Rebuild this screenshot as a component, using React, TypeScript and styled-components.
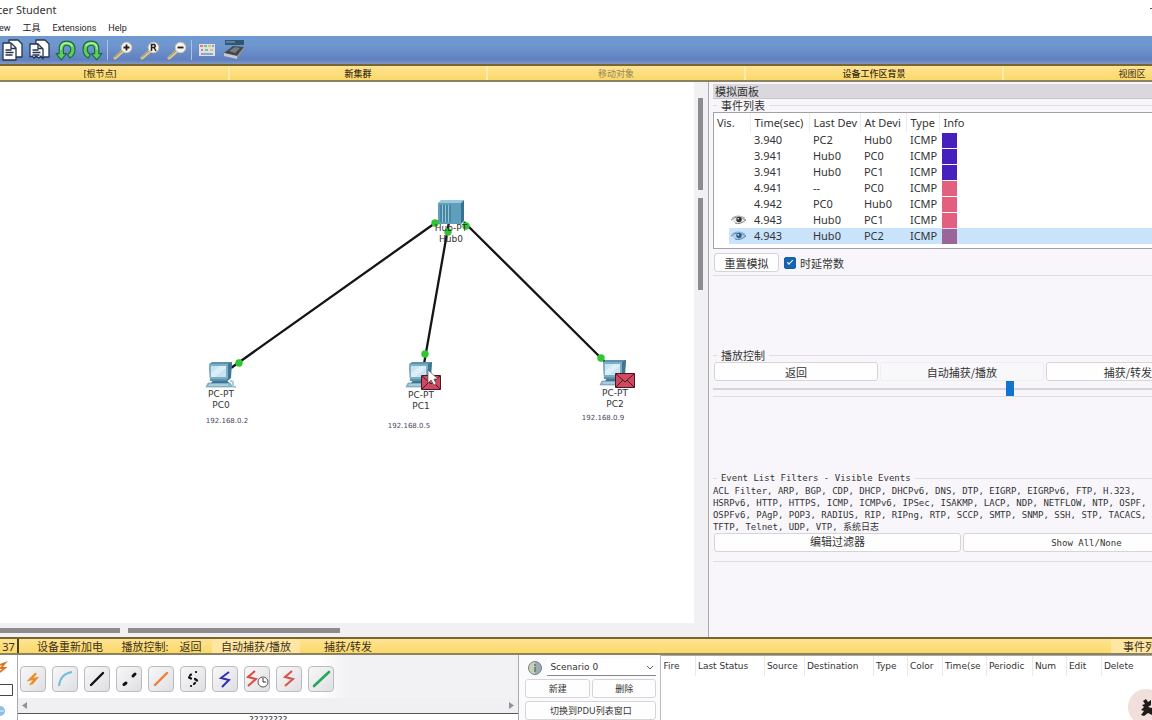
import React, { useState } from "react";
import styled, { createGlobalStyle } from "styled-components";

const CJK = '"Noto Sans CJK SC"';

const GlobalStyle = createGlobalStyle`
  *, *::before, *::after { box-sizing: border-box; }
  body { margin: 0; background: #fff; color: #333; overflow: hidden; font-family: "Noto Sans", ${CJK}, sans-serif; font-size: 11px; }
  button, input, select { font: inherit; color: inherit; margin: 0; padding: 0; }
`;

const Page = styled.div`
  display: flex;
  flex-direction: column;
  height: 100vh;
  overflow: hidden;
`;

const TitleBar = styled.header`
  display: flex;
  justify-content: space-between;
  height: 20px;
  line-height: 20px;
  font-size: 11px;
  white-space: nowrap;
`;
const TitleText = styled.span`
  margin-left: -3px;
`;
const Minimize = styled.span`
  width: 2px;
  height: 1px;
  margin-top: 8px;
  background: #555;
`;

const MenuBar = styled.nav`
  display: flex;
  gap: 12px;
  height: 16px;
  margin-left: -9px;
  font: 9px/16px Roboto, ${CJK}, sans-serif;
`;
const MenuLink = styled.a`
  color: #222;
  text-decoration: none;
`;

const ToolBar = styled.div`
  display: flex;
  align-items: center;
  height: 28px;
  background: linear-gradient(#7099d2, #6f96ce 35%, #6080bf 85%, #8098c4);
  & > :first-child { margin-left: -2px; }
`;
const ToolButton = styled.button`
  width: 27px;
  height: 24px;
  border: 0;
  background: none;
  display: grid;
  place-items: center;
`;
const ToolDivider = styled.i`
  width: 1px;
  height: 20px;
  margin: 0 1px;
  background: #a9c2e6;
`;

const YellowBar = styled.div`
  display: flex;
  flex: none;
  height: 18px;
  overflow: hidden;
  border-top: 2px solid #77672f;
  border-bottom: 2px solid #8a8262;
  background: linear-gradient(#ffe394, #fbd968);
`;
const WorkspaceBar = styled(YellowBar)`
  & > :first-child { margin-left: -28px; }
`;
const RootTab = styled.button<{ $bold?: boolean; $dim?: boolean }>`
  flex: 0 0 258px;
  border: 0;
  border-right: 2px solid #ffeaa8;
  background: none;
  font: ${(p) => (p.$bold ? 500 : 400)} 9px/13px "Noto Sans", ${CJK}, sans-serif;
  color: ${(p) => (p.$dim ? "#94865a" : "#3b3016")};
`;

const Main = styled.main`
  display: grid;
  grid-template-columns: 8fr 5fr;
  flex: 1;
  min-height: 0;
`;

const Workspace = styled.section`
  display: grid;
  grid-template-columns: 1fr 14px;
  grid-template-rows: 1fr 14px;
  min-width: 0;
  min-height: 0;
  background: #f1f0f2;
  border-right: 1px solid #a9a8ab;
`;
const Canvas = styled.div`
  position: relative;
  overflow: hidden;
  background: #fff;
  font: 10px/11px "DejaVu Sans", sans-serif;
`;
const Links = styled.svg`
  display: block;
`;
const NodeLabel = styled.div<{ $x: number; $y: number; $small?: boolean }>`
  position: absolute;
  left: ${(p) => p.$x}px;
  top: ${(p) => p.$y}px;
  transform: translateX(-50%);
  text-align: center;
  white-space: pre;
  color: ${(p) => (p.$small ? "#4b4560" : "#333")};
  font-size: ${(p) => (p.$small ? 7 : 9)}px;
`;
const VTrack = styled.div`
  display: flex;
  flex-direction: column;
  align-items: center;
  gap: 8px;
  padding-top: 16px;
`;
const HTrack = styled.div`
  display: flex;
  align-items: center;
  gap: 8px;
`;
const Thumb = styled.i<{ $w: number; $h: number }>`
  width: ${(p) => p.$w}px;
  height: ${(p) => p.$h}px;
  background: #8c8b8e;
`;

const Panel = styled.aside`
  min-width: 0;
  overflow: hidden;
  padding-left: 4px;
  background: #f8f6fa;
`;
const PanelTitle = styled.h2`
  height: 15px;
  margin: 2px 0 0;
  padding-left: 2px;
  font: 11px/14px ${CJK}, sans-serif;
  background: #dad8dc;
  border-bottom: 1px solid #c6c4c8;
`;
const Group = styled.fieldset<{ $h: number; $mono?: boolean }>`
  width: 497px;
  height: ${(p) => p.$h}px;
  min-width: 0;
  margin: 0;
  padding: 0;
  border: 0;
  font-family: ${(p) => (p.$mono ? `"DejaVu Sans Mono", ${CJK}, monospace` : `${CJK}, sans-serif`)};
  font-size: 10px;
`;
const Legend = styled.legend<{ $text?: number }>`
  display: flex;
  align-items: center;
  gap: 4px;
  width: 100%;
  height: 13px;
  padding: 0;
  line-height: 13px;
  font-size: ${(p) => p.$text ?? 11}px;
  white-space: nowrap;
  &::before, &::after { content: ""; height: 1px; background: #e0dee2; }
  &::before { width: 4px; }
  &::after { flex: 1; }
`;
const Rule = styled.hr<{ $after?: number }>`
  width: 497px;
  height: 1px;
  margin: 0 0 ${(p) => p.$after ?? 0}px;
  border: 0;
  background: #dfdde1;
`;

const EventBox = styled.div`
  height: 137px;
  border: 1px solid #a2a1a5;
  background: #fff;
  overflow: hidden;
`;
const EventTable = styled.table`
  width: 100%;
  table-layout: fixed;
  border-collapse: collapse;
  font: 11px/16px "Noto Sans", sans-serif;
  text-align: left;
  white-space: nowrap;
  th, td { padding: 0; height: 16px; font-weight: 400; overflow: hidden; }
  thead th { height: 19px; padding-left: 3px; border-right: 1px solid #ececee; }
  tbody td { padding-left: 3px; }
`;
const EventRow = styled.tr<{ $selected?: boolean }>`
  background: ${(p) => (p.$selected ? "linear-gradient(90deg, #fff 15px, #c9e3fb 15px)" : "none")};
`;
const Swatch = styled.i<{ $c: string }>`
  display: block;
  width: 15px;
  height: 15px;
  margin-left: -1px;
  background: ${(p) => p.$c};
`;
const EyeCell = styled.td`
  svg { display: block; margin-left: 13px; }
`;

const Row = styled.div<{ $top?: number; $gap?: number }>`
  display: flex;
  align-items: center;
  gap: ${(p) => p.$gap ?? 2}px;
  padding: ${(p) => p.$top ?? 0}px 0 0 1px;
`;
const PushButton = styled.button<{ $w?: number; $flat?: boolean; $text?: number }>`
  flex: ${(p) => (p.$w ? `0 0 ${p.$w}px` : "1")};
  height: 19px;
  border: 1px solid ${(p) => (p.$flat ? "#efedf1" : "#d6d4d8")};
  border-radius: 3px;
  background: ${(p) => (p.$flat ? "#f8f7fa" : "#fefefe")};
  font-size: ${(p) => p.$text ?? 11}px;
  line-height: 16px;
  white-space: nowrap;
`;
const CheckLabel = styled.label`
  display: flex;
  align-items: center;
  gap: 4px;
  font-size: 11px;
  line-height: 16px;
`;
const Check = styled.input`
  appearance: none;
  width: 12px;
  height: 12px;
  border: 1px solid #1460a8;
  border-radius: 2px;
  background: #fff;
  display: grid;
  place-items: center;
  &:checked { background: #1665b0; }
  &:checked::after {
    content: "";
    width: 6px;
    height: 3px;
    margin-bottom: 2px;
    border: solid #fff;
    border-width: 0 0 1px 1px;
    transform: rotate(-45deg);
  }
`;
const Slider = styled.input`
  appearance: none;
  display: block;
  width: 497px;
  height: 15px;
  background: linear-gradient(#d6d4d8, #d6d4d8) center / 100% 2px no-repeat;
  &::-webkit-slider-thumb {
    appearance: none;
    width: 8px;
    height: 15px;
    background: #1374cf;
  }
`;
const FilterText = styled.p`
  margin: 0;
  font-size: 9px;
  line-height: 12px;
  white-space: pre;
`;

const StatusItem = styled.button<{ $w: number; $lit?: boolean; $edge?: boolean; $start?: boolean }>`
  flex: 0 0 ${(p) => p.$w}px;
  border: 0;
  border-right: ${(p) => (p.$edge ? "2px solid #4d421f" : "0")};
  background: ${(p) => (p.$lit ? "#ffe7a3" : "none")};
  font: 11px/13px "Noto Sans", ${CJK}, sans-serif;
  color: #3b3016;
  white-space: nowrap;
  text-align: ${(p) => (p.$start ? "left" : "center")};
  padding-left: ${(p) => (p.$start ? 12 : 0)}px;
  overflow: hidden;
`;
const Spacer = styled.span`
  flex: 1;
`;

const Footer = styled.footer`
  display: flex;
  flex: none;
  height: 65px;
  overflow: hidden;
`;
const DeviceEdge = styled.div`
  flex: 0 0 18px;
  border-right: 1px solid #aaa;
  svg { display: block; }
`;
const Toolbox = styled.div`
  display: flex;
  flex-direction: column;
  flex: 0 0 calc(45% + 1px - 18px);
  min-width: 0;
  border-right: 1px solid #aaa;
`;
const Connections = styled.div`
  display: flex;
  gap: 6px;
  flex: 0 0 43px;
  padding: 11px 0 0 2px;
  background: linear-gradient(90deg, #fff 60%, #f2f1f3 66%);
`;
const CableButton = styled.button`
  width: 26px;
  height: 26px;
  border: 1px solid #bbbac0;
  border-radius: 4px;
  background: linear-gradient(135deg, #f7f6f8, #e0dfe3);
  svg { display: block; }
`;
const ScrollStrip = styled.div`
  display: flex;
  justify-content: space-between;
  align-items: center;
  flex: 0 0 16px;
  padding: 0 4px;
  background: #f0eff2;
  border-bottom: 1px solid #55545a;
`;
const Hint = styled.div`
  font: 9px/12px "DejaVu Sans", sans-serif;
  text-align: center;
`;
const Scenario = styled.div`
  display: flex;
  flex-direction: column;
  gap: 3px;
  flex: 0 0 142px;
  padding: 4px 4px 0 5px;
  border-right: 1px solid #bbb;
  background: #fbfafc;
`;
const ScenarioRow = styled.div`
  display: flex;
  align-items: center;
  gap: 5px;
  height: 18px;
  padding-left: 4px;
`;
const SelectWrap = styled.div`
  position: relative;
  flex: 1;
  svg { position: absolute; right: 2px; top: 6px; pointer-events: none; }
`;
const ScenarioSelect = styled.select`
  appearance: none;
  display: block;
  width: 100%;
  height: 17px;
  padding-left: 3px;
  border: 0;
  border-bottom: 1px solid #85848a;
  background: #fff;
  font: 9px "DejaVu Sans", sans-serif;
`;
const PduPane = styled.div`
  position: relative;
  flex: 1;
  min-width: 0;
  overflow: hidden;
  border-top: 1px solid #aaa;
`;
const PduTable = styled.table`
  table-layout: fixed;
  width: 500px;
  border-collapse: collapse;
  font: 9px/20px "DejaVu Sans", sans-serif;
  th { padding: 0 0 0 2px; font-weight: 400; text-align: left; white-space: nowrap; overflow: hidden; border-right: 1px solid #e9e8eb; }
`;
const Avatar = styled.div`
  position: absolute;
  right: -12px;
  top: 33px;
  width: 36px;
  height: 36px;
  border-radius: 50%;
  background: #f0dfda;
`;

const PagesIcon = ({ torn }: { torn?: boolean }) => (
  <svg width="22" height="22" viewBox="0 0 22 22" stroke="#26344f" strokeWidth="1.3" strokeLinejoin="round" fill="#fff">
    <path d="M8 1h9l4 4v13H8z" />
    <path d={torn ? "M2 5h8l5 5v10l-2-3-2 2-3-2-2 2-2-2-2 1z" : "M2 4h8l5 5v12H2z"} />
    <path d="M10 4.500V9.500h5M4.500 11h6M4.500 13.500h8M4.500 16h7" fill="none" />
  </svg>
);
const ArrowIcon = ({ flip }: { flip?: boolean }) => (
  <svg width="21" height="21" viewBox="0 0 20 20">
    <g transform={flip ? "matrix(-1 0 0 1 20 0)" : undefined} strokeLinejoin="round">
      <path d="M1 13h3V9q0-8 7-8 8 0 8 8 0 6-5 8l-2-3q3-2 3-5 0-4-4-4-3 0-3 4v4h3l-5 6z" fill="#5fce5a" stroke="#1a6a48" strokeWidth="1.1" />
      <path d="M5.500 9q0-6 5.500-6 4 0 5.500 3" fill="none" stroke="#a9ee98" strokeWidth="1.500" />
    </g>
  </svg>
);
const ZoomIcon = ({ kind }: { kind: "in" | "reset" | "out" }) => (
  <svg width="22" height="20" viewBox="0 0 22 20">
    <path d="M3 18L11 11" stroke="#dcc98a" strokeWidth="3" strokeLinecap="round" />
    <path d="M2.500 17.500L10 11" stroke="#8d7d50" strokeWidth=".8" />
    <circle cx="14.500" cy="7.500" r="5.300" fill="#f7f2ea" stroke="#c9c0ae" />
    {kind === "in" && <path d="M11.500 7.500h6M14.500 4.500v6" stroke="#222" strokeWidth="1.800" />}
    {kind === "out" && <path d="M11.500 7.500h6" stroke="#222" strokeWidth="1.800" />}
    {kind === "reset" && <path d="M12.500 11V4.500h3q1.500 1.500 0 3h-3M15 7.500l2 3.500" fill="none" stroke="#222" strokeWidth="1.500" />}
  </svg>
);
const PaletteIcon = () => (
  <svg width="18" height="14" viewBox="0 0 18 14">
    <rect x="1" y="1" width="16" height="12" fill="#dce1e7" />
    <path d="M2 3h3M3 7h2" stroke="#e27b70" strokeWidth="2" />
    <path d="M6 3h3M7 7h3" stroke="#7fc18a" strokeWidth="2" />
    <path d="M10 3h3M12 7h3" stroke="#e1c25e" strokeWidth="2" />
    <path d="M14 3h2M3 11h12" stroke="#8fa4ce" strokeWidth="2" />
  </svg>
);
const DeviceIcon = () => (
  <svg width="24" height="22" viewBox="0 0 24 22">
    <path d="M3 1h19v5H3z" fill="#2d5873" />
    <path d="M4 3h9" stroke="#86aabd" />
    <path d="M2 14l9-7 11 1-7 9z" fill="#44484d" />
    <path d="M7 12l6-4 5 1-5 5z" fill="#777c80" />
    <path d="M2 14l13 3v3L2 17z" fill="#c6c9cb" />
    <path d="M15 17l7-9v3l-7 9z" fill="#8b9195" />
  </svg>
);
const Eye = ({ blue }: { blue?: boolean }) => (
  <svg width="17" height="12" viewBox="0 0 17 12">
    <path d="M1 6q6-6 15 0-6 5-11 3" fill={blue ? "#b3cde4" : "#e5e5e5"} stroke={blue ? "#5c88ad" : "#888"} />
    <path d="M2 4q6-4 13 0" fill="none" stroke={blue ? "#84aac8" : "#aaa"} />
    <circle cx="9" cy="5.500" r="2.700" fill={blue ? "#285f91" : "#333"} />
    <circle cx="8.200" cy="4.700" r=".8" fill="#fff" />
  </svg>
);
const PC = ({ x, y, mail }: { x: number; y: number; mail?: boolean }) => (
  <g transform={`translate(${x} ${y})`}>
    <path d="M2 21h22l3 4H0z" fill="#8db9cd" stroke="#6594aa" strokeWidth=".6" />
    <path d="M3 23h19" stroke="#c7e0eb" />
    <path d="M8 17h12l3 4H5z" fill="#3f7590" />
    <path d="M3 2l3-2h20l-2 17-3 2H4z" fill="#5c93ad" />
    <path d="M22 2l4-2-1 16-4 3z" fill="#3e7791" />
    <path d="M3 2h19v15H4z" fill="#7bafc5" />
    <path d="M5 4h15v11H5z" fill="#c9e3f2" />
    <path d="M5 11L14 4h6v2L9 15H5z" fill="#dceef8" />
    {!mail && <path d="M24 19q4 0 3 3t3 3" fill="none" stroke="#a9c9d8" strokeWidth="2" />}
    {mail && (
      <g transform="translate(15 13)">
        <path d="M.5.5h19v14H.5z" fill="#cf4961" stroke="#4a1723" />
        <path d="M1 1l9 8 9-8M1 14l7-7M19 14l-7-7" fill="none" stroke="#4a1723" />
      </g>
    )}
  </g>
);
const Topology = () => (
  <Links width="694" height="541" viewBox="0 82 694 541" role="img" aria-label="Network topology">
    <g stroke="#151515" strokeWidth="2.300">
      <path d="M231 368L438 221M424 364L449 222M606 363L464 222" />
    </g>
    <g transform="translate(438 200)">
      <path d="M0 3l3-3h23l-3 3z" fill="#9bc9da" />
      <path d="M23 3l3-3v21l-3 3z" fill="#34738f" />
      <path d="M0 3h23v21H0z" fill="#5f9fbb" />
      <path d="M3 5v17M6 5v17M9 5v17M12 5v17" stroke="#2f6e8c" />
      <path d="M4.500 5v17M7.500 5v17M10.500 5v17" stroke="#a4d0df" strokeWidth=".8" />
    </g>
    <PC x={206} y={362} />
    <PC x={406} y={362} mail />
    <PC x={600} y={360} mail />
    <path d="M428 370v13l3-3 3 5 2-1-2-5h4z" fill="#fff" stroke="#555" strokeWidth=".7" />
    <g fill="#2fc62f">
      {[[239, 363], [435, 223], [425, 354], [448, 232], [466, 226], [601, 358]].map(([cx, cy]) => (
        <circle key={`${cx}`} cx={cx} cy={cy} r="3.700" />
      ))}
    </g>
  </Links>
);

const cables: { name: string; art: React.ReactNode }[] = [
  { name: "Automatic", art: <path d="M15 6L8 13l6-1-5 6 M11 17l5-6-6 1 5-5" stroke="#ea8e24" strokeWidth="1.700" /> },
  { name: "Console", art: <path d="M6 19q1-12 13-14" stroke="#70bddc" strokeWidth="1.800" /> },
  { name: "Straight-through", art: <path d="M6 18L18 6" stroke="#111" strokeWidth="2.400" strokeLinecap="round" /> },
  { name: "Cross-over", art: <path d="M7 17.500l2-1.500M16 9l2-2" stroke="#111" strokeWidth="3" strokeLinecap="round" /> },
  { name: "Fiber", art: <path d="M6 18L18 6" stroke="#ee8034" strokeWidth="2.400" strokeLinecap="round" /> },
  { name: "Phone", art: <path d="M15 5h.1M10 7.500l-1 1M8 10.500l2 1M14 12l2 1.500M14 16l-1 1M10 19h.1" stroke="#111" strokeWidth="2.200" strokeLinecap="round" /> },
  { name: "Coaxial", art: <path d="M16 5L8 11l8 2-7 7" stroke="#2f2fb8" strokeWidth="2" /> },
  {
    name: "Serial DCE",
    art: (
      <>
        <path d="M10 4L3 10l8 2-8 7" stroke="#dc493e" strokeWidth="2" />
        <circle cx="18" cy="15" r="5" fill="#fff" stroke="#555" />
        <path d="M18 11v4h3" stroke="#333" />
      </>
    ),
  },
  { name: "Serial DTE", art: <path d="M15 4L8 10l8 2-8 7" stroke="#dc5045" strokeWidth="2" /> },
  { name: "Octal", art: <path d="M5 19L20 5" stroke="#24a65b" strokeWidth="2.600" strokeLinecap="round" /> },
];

const BLUE = "#4520bd";
const PINK = "#e2607e";
const events = [
  ["3.940", "PC2", "Hub0", BLUE],
  ["3.941", "Hub0", "PC0", BLUE],
  ["3.941", "Hub0", "PC1", BLUE],
  ["4.941", "--", "PC0", PINK],
  ["4.942", "PC0", "Hub0", PINK],
  ["4.943", "Hub0", "PC1", PINK],
  ["4.943", "Hub0", "PC2", "#9c6598"],
];

const pduColumns: [string, number][] = [
  ["Fire", 34], ["Last Status", 69], ["Source", 40], ["Destination", 69], ["Type", 34], ["Color", 35],
  ["Time(se", 44], ["Periodic", 46], ["Num", 34], ["Edit", 35], ["Delete", 60],
];

export default function App() {
  const [constant, setConstant] = useState(true);
  const [speed, setSpeed] = useState(599);
  return (
    <Page>
      <GlobalStyle />
      <TitleBar>
        <TitleText>cer Student</TitleText>
        <Minimize />
      </TitleBar>
      <MenuBar>
        <MenuLink href="#view">View</MenuLink>
        <MenuLink href="#tools">工具</MenuLink>
        <MenuLink href="#extensions">Extensions</MenuLink>
        <MenuLink href="#help">Help</MenuLink>
      </MenuBar>
      <ToolBar>
        <ToolButton aria-label="Copy"><PagesIcon /></ToolButton>
        <ToolButton aria-label="Paste"><PagesIcon torn /></ToolButton>
        <ToolButton aria-label="Undo"><ArrowIcon /></ToolButton>
        <ToolButton aria-label="Redo"><ArrowIcon flip /></ToolButton>
        <ToolDivider />
        <ToolButton aria-label="Zoom in"><ZoomIcon kind="in" /></ToolButton>
        <ToolButton aria-label="Zoom reset"><ZoomIcon kind="reset" /></ToolButton>
        <ToolButton aria-label="Zoom out"><ZoomIcon kind="out" /></ToolButton>
        <ToolDivider />
        <ToolButton aria-label="Palette"><PaletteIcon /></ToolButton>
        <ToolButton aria-label="Custom devices"><DeviceIcon /></ToolButton>
      </ToolBar>
      <WorkspaceBar>
        <RootTab>[根节点]</RootTab>
        <RootTab $bold>新集群</RootTab>
        <RootTab $dim>移动对象</RootTab>
        <RootTab $bold>设备工作区背景</RootTab>
        <RootTab>视图区</RootTab>
      </WorkspaceBar>

      <Main>
        <Workspace>
          <Canvas>
            <Topology />
            <NodeLabel $x={451} $y={141}>{"Hub-PT\nHub0"}</NodeLabel>
            <NodeLabel $x={221} $y={307}>{"PC-PT\nPC0"}</NodeLabel>
            <NodeLabel $x={421} $y={308}>{"PC-PT\nPC1"}</NodeLabel>
            <NodeLabel $x={615} $y={306}>{"PC-PT\nPC2"}</NodeLabel>
            <NodeLabel $x={227} $y={334} $small>192.168.0.2</NodeLabel>
            <NodeLabel $x={409} $y={339} $small>192.168.0.5</NodeLabel>
            <NodeLabel $x={603} $y={331} $small>192.168.0.9</NodeLabel>
          </Canvas>
          <VTrack>
            <Thumb $w={5} $h={92} />
            <Thumb $w={5} $h={92} />
          </VTrack>
          <HTrack>
            <Thumb $w={120} $h={5} />
            <Thumb $w={212} $h={5} />
          </HTrack>
        </Workspace>

        <Panel>
          <PanelTitle>模拟面板</PanelTitle>
          <Group $h={176}>
            <Legend>事件列表</Legend>
            <EventBox>
              <EventTable>
                <colgroup>
                  <col width="37" /><col width="59" /><col width="51" /><col width="46" /><col width="33" /><col />
                </colgroup>
                <thead>
                  <tr>
                    <th>Vis.</th><th>Time(sec)</th><th>Last Dev</th><th>At Devi</th><th>Type</th><th>Info</th>
                  </tr>
                </thead>
                <tbody>
                  {events.map(([time, last, at, color], i) => (
                    <EventRow key={i} $selected={i === 6}>
                      <EyeCell>{i > 4 && <Eye blue={i === 6} />}</EyeCell>
                      <td>{time}</td><td>{last}</td><td>{at}</td><td>ICMP</td>
                      <td><Swatch $c={color} /></td>
                    </EventRow>
                  ))}
                </tbody>
              </EventTable>
            </EventBox>
            <Row $top={4} $gap={5}>
              <PushButton $w={65}>重置模拟</PushButton>
              <CheckLabel>
                <Check type="checkbox" checked={constant} onChange={(e) => setConstant(e.target.checked)} />
                时延常数
              </CheckLabel>
            </Row>
          </Group>
          <Rule $after={73} />
          <Group $h={47}>
            <Legend>播放控制</Legend>
            <Row>
              <PushButton>返回</PushButton>
              <PushButton $flat>自动捕获/播放</PushButton>
              <PushButton>捕获/转发</PushButton>
            </Row>
            <Slider
              type="range"
              aria-label="Playback speed"
              min={0}
              max={1000}
              value={speed}
              onChange={(e) => setSpeed(Number(e.target.value))}
            />
          </Group>
          <Rule $after={75} />
          <Group $h={89} $mono>
            <Legend $text={9}>Event List Filters - Visible Events</Legend>
            <FilterText>
              {"ACL Filter, ARP, BGP, CDP, DHCP, DHCPv6, DNS, DTP, EIGRP, EIGRPv6, FTP, H.323,\n" +
                "HSRPv6, HTTP, HTTPS, ICMP, ICMPv6, IPSec, ISAKMP, LACP, NDP, NETFLOW, NTP, OSPF,\n" +
                "OSPFv6, PAgP, POP3, RADIUS, RIP, RIPng, RTP, SCCP, SMTP, SNMP, SSH, STP, TACACS,\n" +
                "TFTP, Telnet, UDP, VTP, 系统日志"}
            </FilterText>
            <Row>
              <PushButton>编辑过滤器</PushButton>
              <PushButton $text={9}>Show All/None</PushButton>
            </Row>
          </Group>
          <Rule />
        </Panel>
      </Main>

      <YellowBar>
        <StatusItem $w={19} $edge>37</StatusItem>
        <StatusItem $w={102}>设备重新加电</StatusItem>
        <StatusItem $w={48}>播放控制:</StatusItem>
        <StatusItem $w={43}>返回</StatusItem>
        <StatusItem $w={88} $lit>自动捕获/播放</StatusItem>
        <StatusItem $w={96}>捕获/转发</StatusItem>
        <Spacer />
        <StatusItem $w={41} $lit $start>事件列表</StatusItem>
      </YellowBar>

      <Footer>
        <DeviceEdge>
          <svg width="17" height="65" viewBox="0 0 17 65" fill="none">
            <path d="M0 10l5-2-4 5h4l-5 4" stroke="#df7427" strokeWidth="1.800" />
            <path d="M0 29.500h12.500v11H0" stroke="#444" />
            <circle cx="0" cy="56" r="5" fill="#8ac0e2" />
            <path d="M0 56h4" stroke="#e7f5fc" />
          </svg>
        </DeviceEdge>
        <Toolbox>
          <Connections>
            {cables.map((c) => (
              <CableButton key={c.name} aria-label={c.name}>
                <svg width="24" height="24" viewBox="0 0 24 24" fill="none">{c.art}</svg>
              </CableButton>
            ))}
          </Connections>
          <ScrollStrip>
            <svg width="5" height="7"><path d="M5 0v7L0 3.500z" fill="#929197" /></svg>
            <svg width="5" height="7"><path d="M0 0v7l5-3.500z" fill="#929197" /></svg>
          </ScrollStrip>
          <Hint>????????</Hint>
        </Toolbox>
        <Scenario>
          <ScenarioRow>
            <svg width="14" height="14" viewBox="0 0 14 14">
              <circle cx="7" cy="7" r="6.500" fill="#9dabb2" stroke="#6f8188" />
              <path d="M7 1a6 6 0 0 0 0 12z" fill="#c8cfaf" />
              <path d="M7 3v2M7 6v5" stroke="#5b7480" strokeWidth="1.500" />
            </svg>
            <SelectWrap>
              <ScenarioSelect aria-label="Scenario"><option>Scenario 0</option></ScenarioSelect>
              <svg width="8" height="6" viewBox="0 0 8 6"><path d="M1 1l3 3 3-3" fill="none" stroke="#666" /></svg>
            </SelectWrap>
          </ScenarioRow>
          <Row>
            <PushButton $text={9}>新建</PushButton>
            <PushButton $text={9}>删除</PushButton>
          </Row>
          <Row>
            <PushButton $text={9}>切换到PDU列表窗口</PushButton>
          </Row>
        </Scenario>
        <PduPane>
          <PduTable>
            <colgroup>{pduColumns.map(([n, w]) => <col key={n} width={w} />)}</colgroup>
            <thead><tr>{pduColumns.map(([n]) => <th key={n} scope="col">{n}</th>)}</tr></thead>
          </PduTable>
          <Avatar>
            <svg width="24" height="36" viewBox="0 0 24 36">
              <path d="M15 12l3-2 2 3 3-2v5l-3 2 4 1v7l-4-2-4 3-3-1 3-4-3-1 3-3-2-2 3-1z" fill="#211b1a" />
            </svg>
          </Avatar>
        </PduPane>
      </Footer>
    </Page>
  );
}
